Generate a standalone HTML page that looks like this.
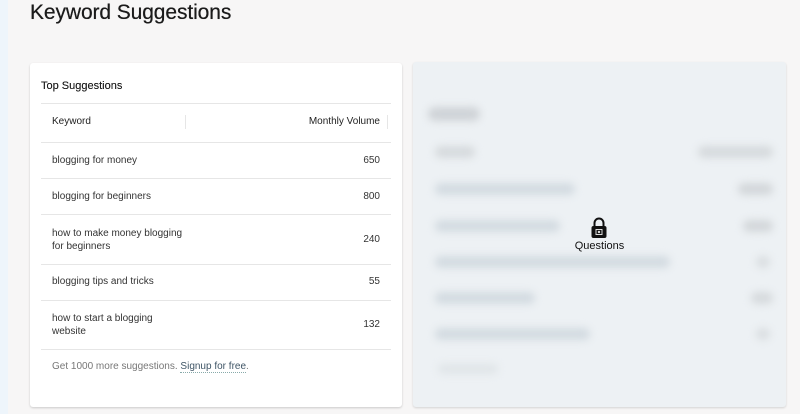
<!DOCTYPE html>
<html><head><meta charset="utf-8"><style>
*{margin:0;padding:0;box-sizing:border-box}
body{width:800px;height:414px;overflow:hidden;background:#f7f6f6;font-family:"Liberation Sans",sans-serif;position:relative}
.strip{position:absolute;left:0;top:0;width:8px;height:414px;background:#eef5fb}
h1{position:absolute;left:30px;top:1px;font-size:21px;font-weight:normal;color:#1b1b1b;letter-spacing:-0.1px;text-shadow:0 0 0.4px #1b1b1b}
.card{position:absolute;left:30px;top:63px;width:372px;height:344px;background:#fff;border-radius:3px;box-shadow:0 1px 2px rgba(0,0,0,.18)}
.t{position:absolute;font-size:10px;color:#333}
.line{position:absolute;left:11px;width:350px;height:1px;background:#e6e6e6}
.num{position:absolute;right:22px;font-size:10px;color:#333;text-align:right}
.rc{position:absolute;left:413px;top:62px;width:373px;height:345px;background:#edf1f4;border-radius:3px;box-shadow:0 1px 2px rgba(0,0,0,.15);overflow:hidden}
.b{position:absolute;background:#d3dbe1;border-radius:7px;filter:blur(4px)}
</style></head><body>
<div class="strip"></div>
<h1>Keyword Suggestions</h1>
<div class="card">
<div class="t" style="left:11px;top:17px;font-size:11px;color:#222;text-shadow:0 0 0.3px #222">Top Suggestions</div>
<div class="line" style="top:40px"></div>
<div class="t" style="left:22px;top:53px;color:#222">Keyword</div>
<div style="position:absolute;left:155px;top:52px;width:1px;height:14px;background:#e6e6e6"></div>
<div class="num" style="top:53px;color:#222">Monthly Volume</div>
<div style="position:absolute;left:357px;top:52px;width:1px;height:14px;background:#e6e6e6"></div>
<div class="line" style="top:79px"></div>
<div class="t" style="left:22px;top:92px">blogging for money</div><div class="num" style="top:92px">650</div>
<div class="line" style="top:115px"></div>
<div class="t" style="left:22px;top:128px">blogging for beginners</div><div class="num" style="top:128px">800</div>
<div class="line" style="top:151px"></div>
<div class="t" style="left:22px;top:164px;line-height:13px">how to make money blogging<br>for beginners</div><div class="num" style="top:171px">240</div>
<div class="line" style="top:201px"></div>
<div class="t" style="left:22px;top:213px">blogging tips and tricks</div><div class="num" style="top:213px">55</div>
<div class="line" style="top:237px"></div>
<div class="t" style="left:22px;top:249px;line-height:13px">how to start a blogging<br>website</div><div class="num" style="top:256px">132</div>
<div class="line" style="top:286px"></div>
<div class="t" style="left:22px;top:298px;color:#777">Get 1000 more suggestions. <span style="color:#3f5566;border-bottom:1px dotted #8aa">Signup for free</span>.</div>
</div>
<div class="rc">
<div class="b" style="left:15px;top:45px;width:52px;height:14px;background:#cfd3d7"></div>
<div class="b" style="left:22px;top:84px;width:40px;height:12px;background:#d6dadd"></div>
<div class="b" style="left:285px;top:84px;width:75px;height:12px;background:#d6dadd"></div>
<div class="b" style="left:22px;top:121px;width:140px;height:12px"></div>
<div class="b" style="left:325px;top:121px;width:35px;height:12px;background:#d3d7da"></div>
<div class="b" style="left:22px;top:158px;width:125px;height:12px"></div>
<div class="b" style="left:330px;top:158px;width:30px;height:12px;background:#d3d7da"></div>
<div class="b" style="left:22px;top:194px;width:235px;height:12px"></div>
<div class="b" style="left:343px;top:194px;width:14px;height:12px;background:#dadee1"></div>
<div class="b" style="left:22px;top:230px;width:100px;height:12px"></div>
<div class="b" style="left:338px;top:230px;width:22px;height:12px;background:#d6dadd"></div>
<div class="b" style="left:22px;top:266px;width:155px;height:12px"></div>
<div class="b" style="left:343px;top:266px;width:14px;height:12px;background:#dadee1"></div>
<div class="b" style="left:25px;top:302px;width:60px;height:10px;background:#e0e5e8"></div>
<svg style="position:absolute;left:177px;top:155px" width="18" height="22" viewBox="0 0 18 22"><path d="M4.5 9V6a4.5 4.5 0 0 1 9 0v3" fill="none" stroke="#111" stroke-width="2"/><rect x="1.5" y="9" width="15" height="12" rx="2" fill="#111"/><rect x="6" y="12.5" width="6" height="5" fill="none" stroke="#ddd" stroke-width="1"/><circle cx="9" cy="15" r="1.2" fill="#ddd"/></svg>
<div style="position:absolute;left:0;width:373px;top:178px;text-align:center;font-size:11px;color:#111">Questions</div>
</div>
</body></html>
